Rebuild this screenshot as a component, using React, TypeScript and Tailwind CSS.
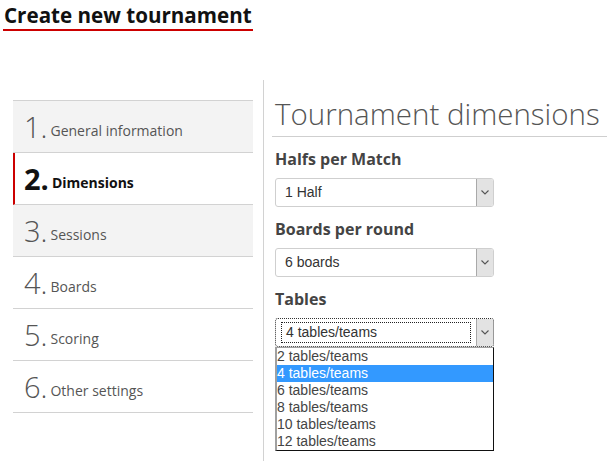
import React from "react";

const steps = [
  { n: 1, label: "General information", bg: "bg-[#f3f3f3]" },
  { n: 2, label: "Dimensions", active: true },
  { n: 3, label: "Sessions", bg: "bg-[#f3f3f3]" },
  { n: 4, label: "Boards" },
  { n: 5, label: "Scoring" },
  { n: 6, label: "Other settings" },
];

const tableOptions = ["2 tables/teams", "4 tables/teams", "6 tables/teams", "8 tables/teams", "10 tables/teams", "12 tables/teams"];

const Chevron = () => (
  <svg width="8" height="5" viewBox="0 0 8 5" fill="none">
    <path d="M0.5 0.5 L4 4 L7.5 0.5" stroke="#555" strokeWidth="1.1" />
  </svg>
);

const FakeSelect = ({ value, focused }: { value: string; focused?: boolean }) => (
  <div
    className={`flex w-[219px] h-[29px] rounded-[3px] bg-white ${
      focused ? "border border-dotted border-[#333]" : "border border-[#cfcfcf]"
    }`}
  >
    <div className="flex-1 flex items-center px-[5px] py-[3px]">
      <div
        className={`w-full h-full flex items-center pl-[4px] font-['Liberation_Sans',Arial,sans-serif] text-[14px] text-[#333] ${
          focused ? "border border-dotted border-[#222]" : ""
        }`}
      >
        {value}
      </div>
    </div>
    <div className="w-[17px] flex items-center justify-center bg-[#e3e3e3] border-l border-[#a9a9a9] rounded-r-[2px]">
      <Chevron />
    </div>
  </div>
);

export default function App() {
  return (
    <div className="w-[607px] h-[462px] bg-white overflow-hidden font-['Open_Sans',sans-serif] text-[#555]">
      {/* Page title */}
      <div className="pl-[3px] pt-[1px]">
        <h1 className="inline-block text-[20.6px] leading-[28px] font-bold text-[#111] border-b-2 border-[#cc0000] px-[1px]">
          Create new tournament
        </h1>
      </div>

      <div className="flex mt-[49px]">
        {/* Steps nav */}
        <div className="w-[263px] shrink-0 pl-[13px] pr-[10px] pt-[20px]">
          <div className="border-t border-[#d2d2d2]">
            {steps.map((s) => (
              <div
                key={s.n}
                className={`h-[52px] flex items-center border-b border-[#d2d2d2] ${
                  s.active ? "border-l-2 border-l-[#cc0000] pl-[9px] bg-white" : `pl-[11px] ${s.bg ?? "bg-white"}`
                }`}
              >
                <span
                  className={`text-[29px] leading-none ${
                    s.active ? "font-bold text-[#111]" : "font-light text-[#555]"
                  }`}
                >
                  {s.n}.
                </span>
                <span
                  className={`ml-[3px] mt-[8px] text-[14px] ${
                    s.active ? "font-bold text-[#111]" : "text-[#555]"
                  }`}
                >
                  {s.label}
                </span>
              </div>
            ))}
          </div>
        </div>

        {/* Form */}
        <div className="flex-1 min-w-0 border-l border-[#d2d2d2] pl-[8px] h-[381px]">
          <h2 className="mt-[14px] pl-[3px] text-[29.5px] leading-[40px] font-light text-[#555] border-b border-[#cfcfcf] pb-[2px] whitespace-nowrap">
            Tournament dimensions
          </h2>

          <div className="pl-[3px]">
            <div className="mt-[11px] text-[16px] leading-[22px] font-bold text-[#444]">Halfs per Match</div>
            <div className="mt-[8px]">
              <FakeSelect value="1 Half" />
            </div>

            <div className="mt-[11px] text-[16px] leading-[22px] font-bold text-[#444]">Boards per round</div>
            <div className="mt-[8px]">
              <FakeSelect value="6 boards" />
            </div>

            <div className="mt-[11px] text-[16px] leading-[22px] font-bold text-[#444]">Tables</div>
            <div className="mt-[8px]">
              <FakeSelect value="4 tables/teams" focused />
            </div>

            {/* Open dropdown list */}
            <div className="w-[219px] border-l-2 border-l-[#a0a0a0] border-t border-t-[#a0a0a0] border-r border-r-[#111] border-b border-b-[#111] bg-white font-['Liberation_Sans',Arial,sans-serif] text-[14px] text-[#444]">
              {tableOptions.map((o) => (
                <div
                  key={o}
                  className={`h-[17px] leading-[17px] ${o.startsWith("4 ") ? "bg-[#3399ff] text-white" : ""}`}
                >
                  {o}
                </div>
              ))}
            </div>
          </div>
        </div>
      </div>
    </div>
  );
}
